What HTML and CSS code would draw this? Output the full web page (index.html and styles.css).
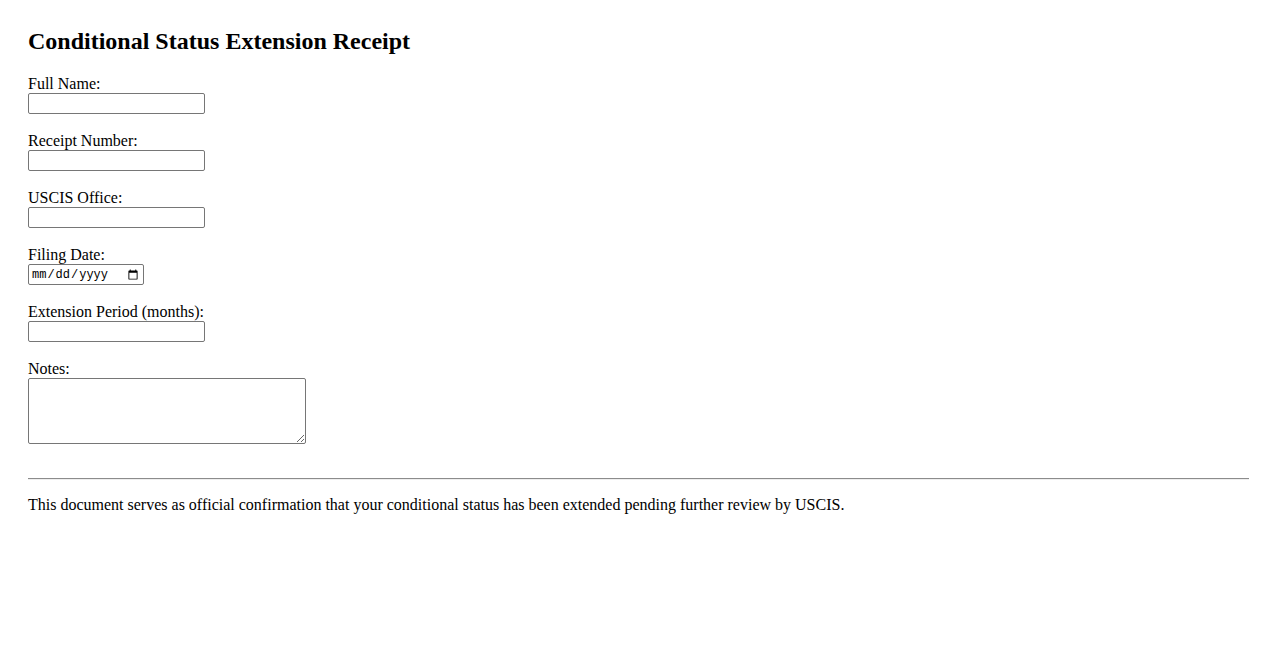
FILE: index.html
```html
<!DOCTYPE html>
<html lang="en">
<head>
<meta charset="utf-8">
<title>Conditional Status Extension Receipt</title>
<link rel="stylesheet" href="styles.css">
</head>
<body>
<h2 class="title">Conditional Status Extension Receipt</h2>
<form class="form">
  <div class="group">
    <label class="label" for="name">Full Name:</label>
    <input class="field" type="text" id="name">
  </div>
  <div class="group">
    <label class="label" for="receipt">Receipt Number:</label>
    <input class="field" type="text" id="receipt">
  </div>
  <div class="group">
    <label class="label" for="office">USCIS Office:</label>
    <input class="field" type="text" id="office">
  </div>
  <div class="group">
    <label class="label" for="date">Filing Date:</label>
    <input class="field date" type="date" id="date">
  </div>
  <div class="group">
    <label class="label" for="period">Extension Period (months):</label>
    <input class="field" type="text" id="period">
  </div>
  <div class="group last">
    <label class="label" for="notes">Notes:</label>
    <textarea class="notes" id="notes"></textarea>
  </div>
</form>
<hr class="rule">
<p class="note">This document serves as official confirmation that your conditional status has been extended pending further review by USCIS.</p>
</body>
</html>
```
FILE: styles.css
```css
html, body {
  background: #fff;
}
body {
  margin: 0;
  padding: 27px 29px 28px 28px;
  font-family: "Liberation Serif", "Times New Roman", serif;
  font-size: 16px;
  color: #000;
}
.title {
  margin: 0 0 20px 0;
  font-size: 24px;
  line-height: 28px;
  font-weight: bold;
}
.form {
  margin: 0;
}
.group {
  margin-bottom: 18px;
}
.group.last {
  margin-bottom: 0;
}
.label {
  display: block;
  height: 18px;
  line-height: 18px;
}
.field {
  display: block;
  box-sizing: border-box;
  width: 177px;
  height: 21px;
  margin: 0;
  padding: 1px 2px;
  border: 1px solid #767676;
  border-radius: 2px;
  background: #fff;
  font-family: "Liberation Sans", Arial, sans-serif;
  font-size: 13.33px;
}
.field.date {
  width: 116px;
  font-family: "Liberation Mono", "DejaVu Sans Mono", monospace;
  font-size: 12px;
  color: #000;
}
.notes {
  display: block;
  box-sizing: border-box;
  width: 278px;
  height: 66px;
  margin: 0;
  padding: 2px;
  border: 1px solid #767676;
  border-radius: 2px;
  font-family: "Liberation Mono", monospace;
  font-size: 13.33px;
  resize: both;
}
.rule {
  margin: 34px 0 0 0;
  border: 0;
  border-top: 1px solid #8c8c8c;
  border-bottom: 1px solid #eeeeee;
  height: 0;
}
.note {
  margin: 16px 0 0 0;
  line-height: 18px;
}
```
